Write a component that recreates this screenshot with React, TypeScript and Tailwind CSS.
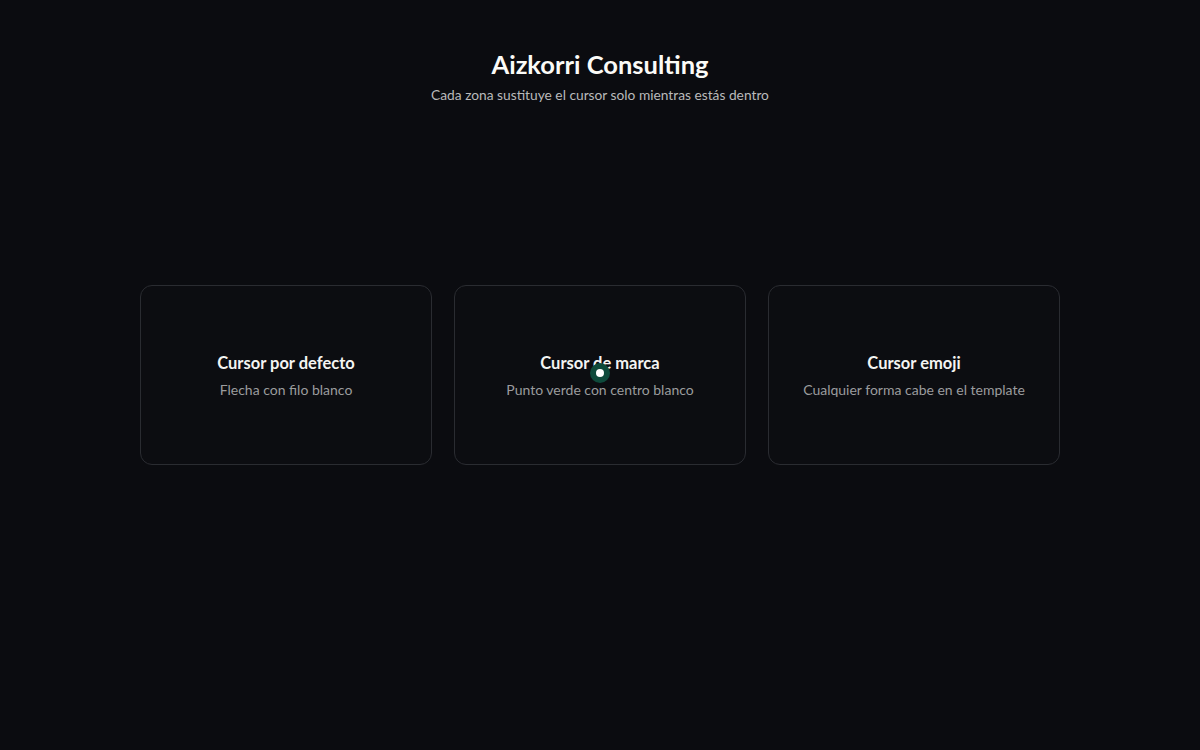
import React from "react";

type Zone = {
  title: string;
  detail: string;
  brand?: boolean;
};

const zones: Zone[] = [
  { title: "Cursor por defecto", detail: "Flecha con filo blanco" },
  { title: "Cursor de marca", detail: "Punto verde con centro blanco", brand: true },
  { title: "Cursor emoji", detail: "Cualquier forma cabe en el template" },
];

const BrandCursor = () => (
  <span className="pointer-events-none absolute left-1/2 top-[77px] flex h-[20px] w-[20px] -translate-x-1/2 items-center justify-center rounded-full bg-[#0e4a3b]">
    <span className="h-[8px] w-[8px] rounded-full bg-white" />
  </span>
);

const ZoneCard = ({ zone }: { zone: Zone }) => (
  <div className="relative flex h-[180px] flex-col items-center justify-center rounded-[12px] border border-[#2a2c31] bg-[#0c0d11] pt-[2px]">
    <h2 className="text-[16.5px] font-bold leading-[22px] text-[#f4f4f2]">
      {zone.title}
    </h2>
    <p className="mt-[6px] text-[14px] leading-[20px] text-[#9b9c9e]">
      {zone.detail}
    </p>
    {zone.brand && <BrandCursor />}
  </div>
);

export default function App() {
  return (
    <div
      className="min-h-screen bg-[#0b0c10] pt-[46px]"
      style={{ fontFamily: 'Lato, "Noto Sans", sans-serif' }}
    >
      <header className="text-center">
        <h1 className="text-[25.5px] font-bold leading-[36px] text-[#fbfbf7]">
          Aizkorri Consulting
        </h1>
        <p className="mt-[4px] text-[13.75px] leading-[18px] text-[#b9babb]">
          Cada zona sustituye el cursor solo mientras estás dentro
        </p>
      </header>
      <section className="mx-auto mt-[181px] grid w-[920px] grid-cols-3 gap-[22px]">
        {zones.map((zone) => (
          <ZoneCard key={zone.title} zone={zone} />
        ))}
      </section>
    </div>
  );
}
